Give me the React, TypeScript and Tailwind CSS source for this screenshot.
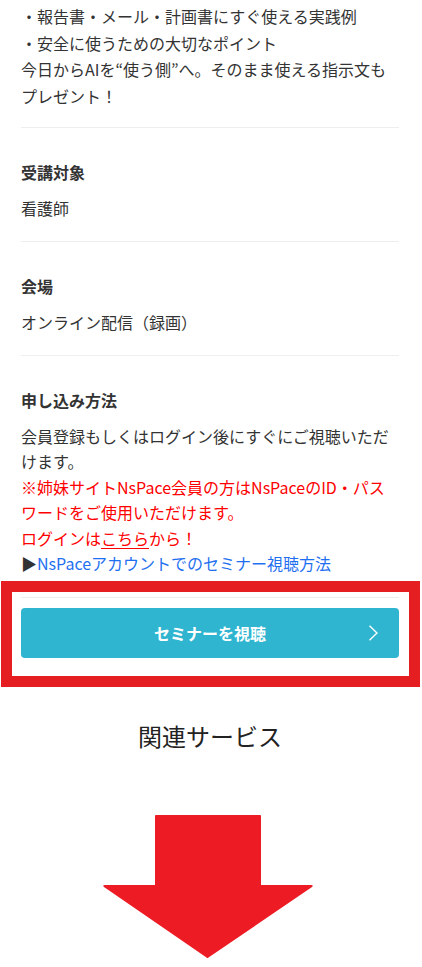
import React from "react";

const font = { fontFamily: "'Noto Sans CJK JP', 'Noto Sans', sans-serif" };

export default function App() {
  return (
    <div className="w-[422px] min-h-[967px] bg-white text-[#333333] overflow-hidden" style={font}>
      <div className="ml-[21px] w-[378px]">
        <div className="pt-[3px] pb-[18px] border-b border-[#eeeeee] text-[16px] leading-[26.5px]">
          <p>・報告書・メール・計画書にすぐ使える実践例</p>
          <p>・安全に使うための大切なポイント</p>
          <p>今日からAIを“使う側”へ。そのまま使える指示文もプレゼント！</p>
        </div>

        <div className="pt-8 pb-5 border-b border-[#eeeeee] text-[16px] leading-[25.6px]">
          <h3 className="font-bold">受講対象</h3>
          <p className="mt-2.5">看護師</p>
        </div>

        <div className="pt-8 pb-5 border-b border-[#eeeeee] text-[16px] leading-[25.6px]">
          <h3 className="font-bold">会場</h3>
          <p className="mt-2.5">オンライン配信（録画）</p>
        </div>

        <div className="relative">
          <div className="pt-8 pb-5 border-b border-[#eeeeee] text-[16px] leading-[25.5px]">
            <h3 className="font-bold">申し込み方法</h3>
            <div className="mt-2.5">
              <p>会員登録もしくはログイン後にすぐにご視聴いただけます。</p>
              <p className="text-[#ff0000]">※姉妹サイトNsPace会員の方はNsPaceのID・パスワードをご使用いただけます。</p>
              <p className="text-[#ff0000]">
                ログインは<span className="underline underline-offset-[3px]">こちら</span>から！
              </p>
              <p>
                ▶<span className="text-[#1f70f0]">NsPaceアカウントでのセミナー視聴方法</span>
              </p>
            </div>
          </div>

          <button className="mt-[10px] w-full h-[50px] rounded-[4px] bg-[#2fb5d0] flex items-center justify-center relative text-white font-bold text-[16px]">
            <span>セミナーを視聴</span>
            <svg className="absolute right-[20px] top-[17px]" width="11" height="16" viewBox="0 0 11 16" fill="none">
              <polyline points="1.5,0.8 9,8 1.5,15.2" stroke="white" strokeWidth="1.4" />
            </svg>
          </button>

          <div className="absolute left-[-20px] right-[-21px] bottom-[-29px] h-[106px] border-[11px] border-[#e51e22] pointer-events-none" />
        </div>

        <h2 className="mt-[60px] text-center text-[24px] leading-[36px] text-[#222222]">関連サービス</h2>
      </div>

      <svg className="mt-[61px] ml-[103px] block" width="211" height="144" viewBox="0 0 211 144">
        <path
          d="M52 1 Q52 0 53 0 L157 0 Q158 0 158 1 L158 70 L208 70 Q211 70 209 72 L105.5 142.5 Q104.5 143.5 103.5 142.5 L1 72 Q-1 70 2 70 L52 70 Z"
          fill="#ed1c24"
        />
      </svg>
    </div>
  );
}
